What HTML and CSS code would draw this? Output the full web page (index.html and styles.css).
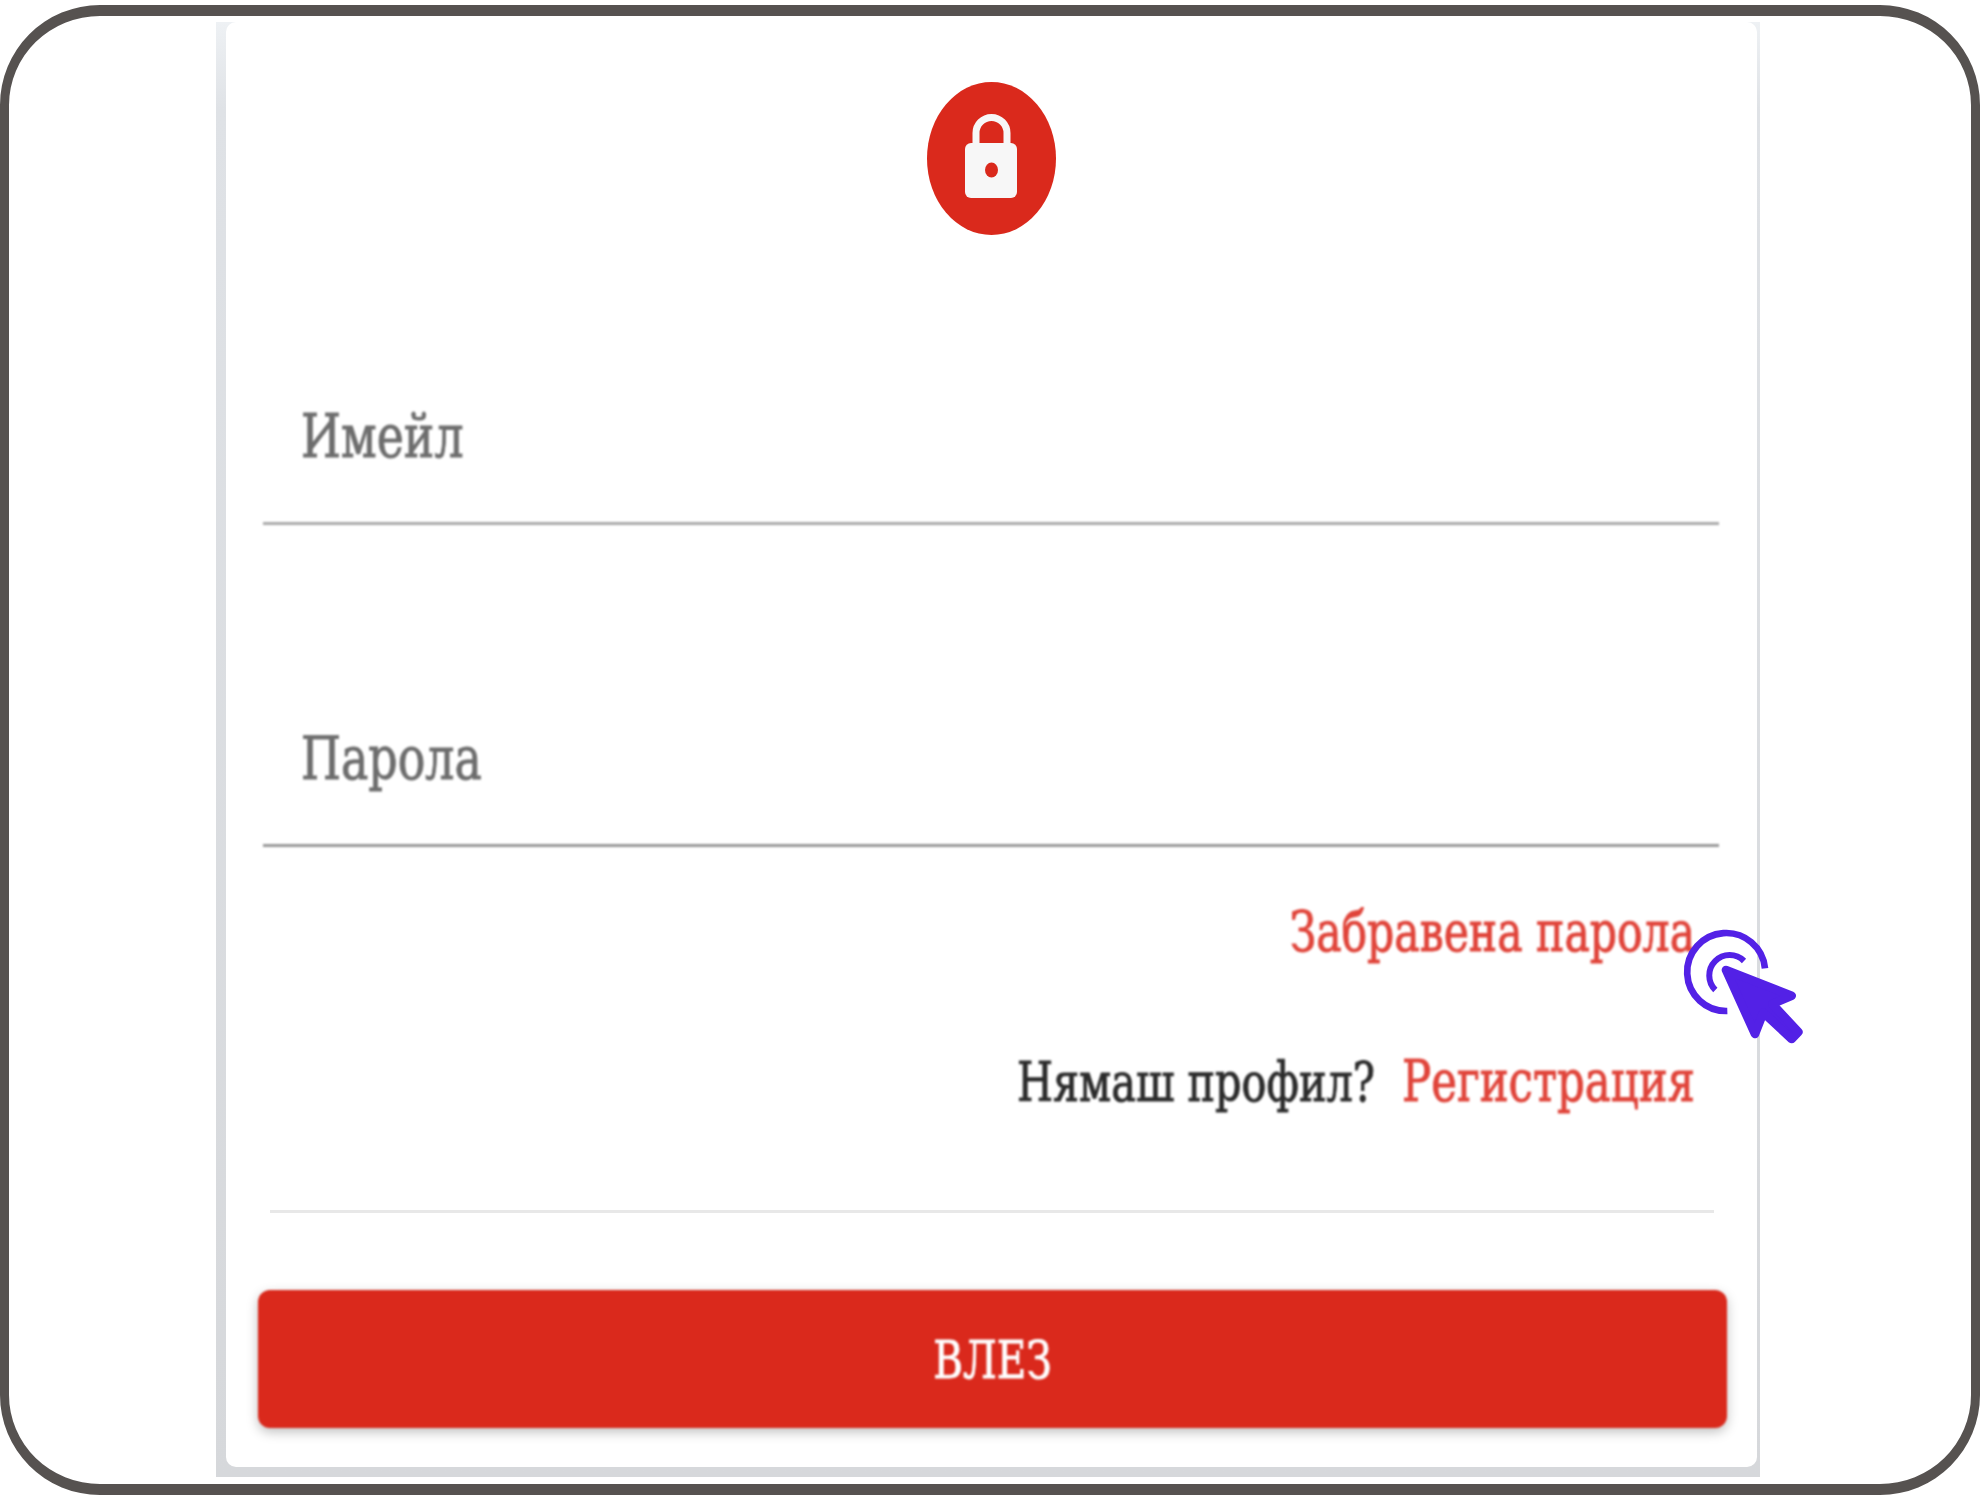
FILE: index.html
```html
<!DOCTYPE html>
<html lang="bg">
<head>
    <meta charset="utf-8">
    <title>Вход</title>
    <link rel="stylesheet" href="styles.css">
</head>
<body>
    <div class="frame">
        <div class="shot">
            <div class="card">
                <div class="avatar">
                    <svg class="lock" viewBox="0 0 129 153">
                        <path class="shackle" d="M49 64V51a15.500 15.500 0 0 1 31 0V64"/>
                        <rect class="lock-body" x="38" y="61" width="52" height="55" rx="6"/>
                        <ellipse class="lock-hole" cx="64.500" cy="88" rx="6.500" ry="7.500"/>
                    </svg>
                </div>

                <div class="field field-first"><span class="tall">Имейл</span></div>
                <div class="field field-second"><span class="tall">Парола</span></div>

                <div class="link-row row-forgot">
                    <a class="tall link">Забравена парола</a>
                </div>
                <div class="link-row row-signup">
                    <span class="tall signup"><span class="muted">Нямаш профил?</span><a class="link link-big">Регистрация</a></span>
                </div>

                <div class="divider"></div>
                <button class="submit"><span class="tall">ВЛЕЗ</span></button>
            </div>

            <!-- click cursor, sits over the card edge -->
            <svg class="cursor" viewBox="0 0 600 510">
                <path class="ring ring-outer" d="M375 205A117 117 0 1 0 262 333"/>
                <path class="ring ring-inner" d="M312 183A61 61 0 1 0 226 270"/>
                <path class="arrow" d="M258 210L455 287L397 312L475 396L455 417L370 338L345 402Z"/>
            </svg>
        </div>
    </div>
</body>
</html>
```

FILE: styles.css
```css
* {
    box-sizing: border-box;
}

html, body {
    margin: 0;
    background: #fff;
}

body {
    width: 1980px;
    height: 1500px;
    padding-top: 5px;
    overflow: hidden;
    font-family: "DejaVu Serif Condensed", "DejaVu Serif", "Liberation Serif", serif;
}

.frame {
    width: 1980px;
    height: 1490px;
    padding: 6px 0 0 207px;
    border-style: solid;
    border-color: #565250;
    border-width: 11px 9px;
    border-radius: 100px;
    background: #fff;
}

.shot {
    position: relative;
    width: 1544px;
    height: 1455px;
    padding: 0 3px 10px 10px;
    background: linear-gradient(to bottom, #eef1f4, #dfe2e6 6%, #d6d8db);
}

.card {
    display: flex;
    flex-direction: column;
    height: 100%;
    padding: 60px 30px 0 32px;
    border-radius: 10px;
    background: #fff;
}

.tall {
    display: inline-block;
    transform: scaleY(1.18);
    white-space: nowrap;
    -webkit-text-stroke: 0.8px currentColor;
}

.avatar {
    align-self: center;
    width: 129px;
    height: 153px;
    margin-right: 2px;
    border-radius: 50%;
    background: #da291c;
    filter: blur(0.7px);
}

.lock {
    display: block;
    width: 129px;
    height: 153px;
}

.shackle {
    fill: none;
    stroke: #f7f7f7;
    stroke-width: 7;
}

.lock-body {
    fill: #f7f7f7;
}

.lock-hole {
    fill: #da291c;
}

.field {
    display: flex;
    align-items: center;
    margin: 0 8px 0 5px;
    padding-left: 38px;
    border-bottom: 3px solid #aaa;
    color: #6d6d6d;
    font-size: 51px;
    filter: blur(0.9px);
}

.field-first {
    height: 290px;
    padding-top: 116px;
}

.field-second {
    height: 322px;
    padding-top: 148px;
    border-bottom-color: #999;
}

.link-row {
    display: flex;
    justify-content: flex-end;
    padding-right: 32px;
    font-size: 46px;
    filter: blur(0.9px);
}

.row-forgot {
    margin-top: 57px;
    font-size: 47.3px;
}

.row-signup {
    margin-top: 94px;
}

.link {
    color: #e0443a;
}

.link-big {
    font-size: 48.3px;
}

.muted {
    margin-right: 27px;
    color: #2b2b2b;
}

.divider {
    height: 3px;
    margin: 101px 13px 0 12px;
    background: #e8e8e8;
    filter: blur(0.5px);
}

.submit {
    height: 138px;
    margin-top: 77px;
    border: none;
    border-radius: 12px;
    background: #da291c;
    box-shadow: 0 4px 12px rgba(0,0,0,0.25);
    color: #fff;
    font-family: inherit;
    font-size: 45px;
    filter: blur(0.8px);
}

.cursor {
    position: absolute;
    left: 1424px;
    top: 878px;
    width: 200px;
    height: 170px;
}

.ring {
    fill: none;
    stroke: #5321e6;
}

.ring-outer {
    stroke-width: 20;
}

.ring-inner {
    stroke-width: 18;
}

.arrow {
    fill: #5321e6;
    stroke: #5321e6;
    stroke-width: 26;
    stroke-linejoin: round;
}
```
